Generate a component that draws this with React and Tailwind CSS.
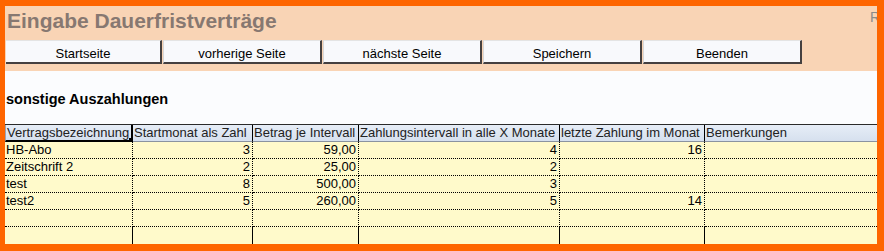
import React from "react";

const cols = [
  "Vertragsbezeichnung",
  "Startmonat als Zahl",
  "Betrag je Intervall",
  "Zahlungsintervall in alle X Monate",
  "letzte Zahlung im Monat",
  "Bemerkungen",
];

const rows = [
  ["HB-Abo", "3", "59,00", "4", "16", ""],
  ["Zeitschrift 2", "2", "25,00", "2", "", ""],
  ["test", "8", "500,00", "3", "", ""],
  ["test2", "5", "260,00", "5", "14", ""],
  ["", "", "", "", "", ""],
  ["", "", "", "", "", ""],
];

const buttons = ["Startseite", "vorherige Seite", "nächste Seite", "Speichern", "Beenden"];

export default function App() {
  return (
    <div
      className="w-[884px] h-[251px] bg-[#fe6500] pt-[6px] pl-[5px] pr-[7px] pb-[7px] overflow-hidden"
      style={{ fontFamily: '"Liberation Sans", Arial, sans-serif' }}
    >
      <div className="w-[872px] h-[238px] flex flex-col bg-[#fbfcfe] overflow-hidden">
        {/* header band */}
        <div className="h-[66px] bg-[#f9d4b5] flex flex-col overflow-hidden">
          <div className="flex justify-between items-start h-[34px]">
            <div className="text-[21px] font-bold text-[#877871] leading-[24px] pl-[2px] pt-[3px]">
              Eingabe Dauerfristverträge
            </div>
            <div className="text-[14px] text-[#8a8a8a] leading-[16px] pt-[3px] mr-[-3px]">R</div>
          </div>
          <div className="flex gap-[1px] pl-[1px]">
            {buttons.map((b, i) => (
              <div
                key={b}
                className={`${i === 0 ? "w-[156px] border-l-0" : "w-[159px] border-l border-l-[#d8d8d8]"} h-[24px] pt-[3px] bg-[#f8f9fc] border-t border-t-[#e4e4e4] border-r-2 border-r-[#454040] border-b-2 border-b-[#454040] flex items-center justify-center text-[13px] text-black leading-none`}
              >
                {b}
              </div>
            ))}
          </div>
        </div>

        {/* section title */}
        <div className="h-[53px] flex items-center pl-[1px] pt-[4px]">
          <div className="text-[14.5px] font-bold text-black">sonstige Auszahlungen</div>
        </div>

        {/* table */}
        <div className="border-t border-t-[#2a2a2a] grid grid-cols-[128px_120px_106px_201px_145px_172px] text-[13px] leading-[16px] text-black">
          {cols.map((c, i) => (
            <div
              key={c}
              className={`relative h-[17px] bg-gradient-to-b from-[#e6edf7] to-[#d6e0ee] whitespace-nowrap overflow-hidden pl-[1px] text-[#222] ${
                i < cols.length - 1 ? "border-r border-r-black" : ""
              } ${i === 0 ? "border-b-2 border-b-black border-r-2 border-l border-l-[#9aa4b4]" : "border-b border-b-[#8a93a0]"}`}
            >
              {c}
              {i === 0 && (
                <span className="absolute right-[-2px] bottom-[-2px] w-[4px] h-[4px] bg-black" />
              )}
            </div>
          ))}
          {rows.map((r, ri) =>
            r.map((v, ci) => (
              <div
                key={`${ri}-${ci}`}
                className={`h-[17px] bg-[#fffacb] whitespace-nowrap overflow-hidden ${
                  ci === 0 ? "text-left pl-[1px]" : "text-right pr-[2px]"
                } ${ci < cols.length - 1 ? "border-r border-r-black" : ""} ${
                  ri < rows.length - 1 ? "border-b border-dotted border-b-black" : ""
                }`}
              >
                {v}
              </div>
            ))
          )}
        </div>
      </div>
    </div>
  );
}
